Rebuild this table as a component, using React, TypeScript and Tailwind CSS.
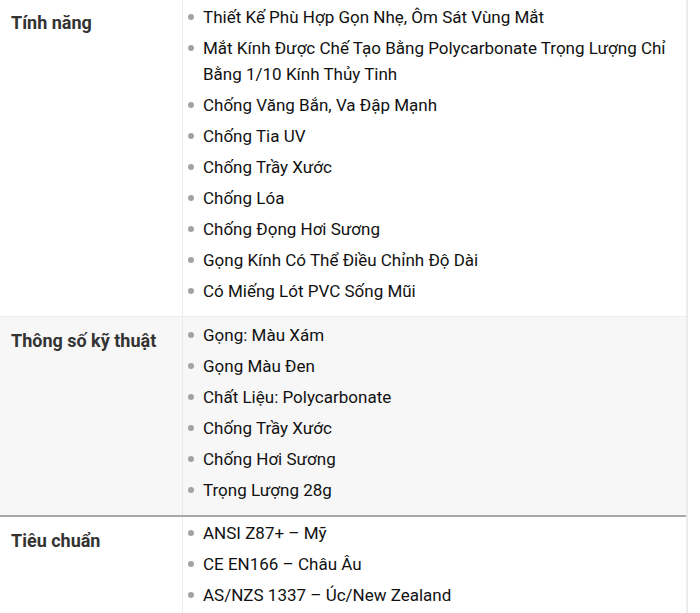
import React from "react";

const rows: { label: string; items: string[]; bg: string; border: string; pt: string; pb: string; lpt: string }[] = [
  {
    label: "Tính năng",
    items: [
      "Thiết Kế Phù Hợp Gọn Nhẹ, Ôm Sát Vùng Mắt",
      "Mắt Kính Được Chế Tạo Bằng Polycarbonate Trọng Lượng Chỉ Bằng 1/10 Kính Thủy Tinh",
      "Chống Văng Bắn, Va Đập Mạnh",
      "Chống Tia UV",
      "Chống Trầy Xước",
      "Chống Lóa",
      "Chống Đọng Hơi Sương",
      "Gọng Kính Có Thể Điều Chỉnh Độ Dài",
      "Có Miếng Lót PVC Sống Mũi",
    ],
    bg: "bg-white",
    border: "border-b border-[#ececec]",
    pt: "pt-[4px]",
    pb: "pb-[12px]",
    lpt: "pt-[10px]",
  },
  {
    label: "Thông số kỹ thuật",
    items: [
      "Gọng: Màu Xám",
      "Gọng Màu Đen",
      "Chất Liệu: Polycarbonate",
      "Chống Trầy Xước",
      "Chống Hơi Sương",
      "Trọng Lượng 28g",
    ],
    bg: "bg-[#f7f7f7]",
    border: "border-b-2 border-[#a8a8a8]",
    pt: "pt-[5px]",
    pb: "pb-[12px]",
    lpt: "pt-[11px]",
  },
  {
    label: "Tiêu chuẩn",
    items: ["ANSI Z87+ – Mỹ", "CE EN166 – Châu Âu", "AS/NZS 1337 – Úc/New Zealand"],
    bg: "bg-white",
    border: "",
    pt: "pt-[3px]",
    pb: "pb-[12px]",
    lpt: "pt-[11px]",
  },
];

export default function App() {
  return (
    <div className="w-[700px] h-[613px] overflow-hidden bg-white" style={{ fontFamily: "Roboto, 'Liberation Sans', sans-serif" }}>
      <div className="w-[688px] border-r-2 border-[#ebebeb]">
        {rows.map((r) => (
          <div key={r.label} className={`flex ${r.bg} ${r.border}`}>
            <div className={`w-[183px] shrink-0 border-r border-[#ececec] pl-[11px] ${r.lpt}`}>
              <div className="text-[18px] leading-[26px] font-bold text-[#333]">{r.label}</div>
            </div>
            <ul className={`flex-1 flex flex-col gap-[5px] pl-[5px] pr-[10px] ${r.pt} ${r.pb}`}>
              {r.items.map((it) => (
                <li key={it} className="flex text-[17px] leading-[26px] text-[#111]">
                  <span className="w-[15px] shrink-0 flex items-start pt-[10px]">
                    <span className="w-[6px] h-[6px] rounded-full bg-[#a3a3a3]" />
                  </span>
                  <span>{it}</span>
                </li>
              ))}
            </ul>
          </div>
        ))}
      </div>
    </div>
  );
}
